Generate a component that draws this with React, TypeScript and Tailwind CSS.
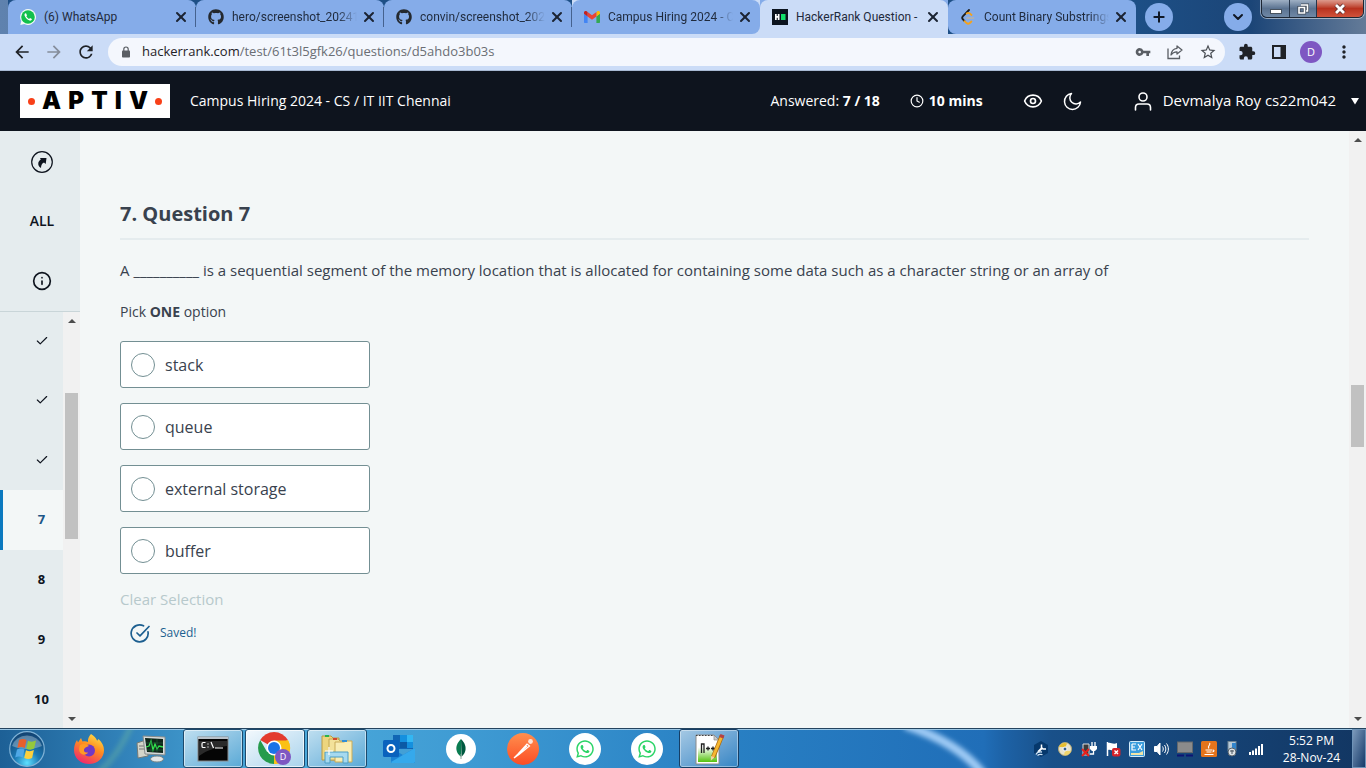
import React from "react";
import { Check, Clock, Eye, Info, Moon, Plus, User, X, ChevronDown } from "lucide-react";
import { FaGithub, FaWhatsapp } from "react-icons/fa";
import { MdArrowBack, MdArrowForward, MdMoreVert, MdRefresh, MdStarBorder, MdVpnKey } from "react-icons/md";

const WhatsAppIcon = () => (
  <svg viewBox="0 0 16 16" className="size-4 shrink-0">
    <path d="M8 0a8 8 0 1 1-3.700 15.100L.3 15.900l1-3.800A8 8 0 0 1 8 0z" fill="#f2fbf5" />
    <circle cx="8" cy="8" r="6.800" fill="#12c04c" />
    <path
      d="M5.300 4.200c-.9.700-1 1.700-.5 2.900 1 2.200 2.500 3.700 4.700 4.500 1.100.3 2.300-.3 2.400-1.600L10 9l-.9 1C7.800 9.500 6.900 8.500 6.300 7.300l.7-.9-.8-2z"
      fill="#fff"
    />
  </svg>
);

const GmailIcon = () => (
  <svg viewBox="0 0 16 12" className="w-4 shrink-0">
    <path d="M1 12h2.600V5.200L0 2.600V11c0 .6.4 1 1 1z" fill="#4285f4" />
    <path d="M12.400 12H15c.6 0 1-.4 1-1V2.600l-3.600 2.600z" fill="#34a853" />
    <path d="M12.400 1v4.400L16 2.700V1.500C16 .2 14.400-.5 13.400.3z" fill="#fbbc04" />
    <path d="M3.600 5.400V1L8 4.300 12.400 1v4.400L8 8.700z" fill="#ea4335" />
    <path d="M0 1.500v1.200l3.600 2.700V1L2.600.3C1.600-.5 0 .2 0 1.500z" fill="#c5221f" />
  </svg>
);

const HackerRankIcon = () => (
  <svg viewBox="0 0 16 16" className="size-4 shrink-0">
    <rect width="16" height="16" fill="#0c141f" />
    <path d="M3 5h1.700v2h1.100V5h1.700v6H5.800V8.800H4.700V11H3z" fill="#fff" />
    <rect x="9" y="5" width="4.500" height="6" fill="#12e06a" />
  </svg>
);

const LeetCodeIcon = () => (
  <svg viewBox="0 0 16 16" className="size-4 shrink-0" fill="none" strokeLinecap="round">
    <path d="M9 1 3 7.200c-1 1-1 2.300 0 3.300l1.500 1.600" stroke="#1c1c1c" strokeWidth="1.800" />
    <path d="M4.500 12.200 6.500 14c1 .9 2.300.9 3.300 0l1.600-1.500M6.700 4.500c1.200-.9 2.300-.8 3.300.1l1.500 1.400" stroke="#f5a21c" strokeWidth="1.800" />
    <path d="M7 9h6.500" stroke="#b9b3a8" strokeWidth="1.600" />
  </svg>
);

const tabs = [
  { title: "(6) WhatsApp", icon: <WhatsAppIcon /> },
  { title: "hero/screenshot_20241", icon: <FaGithub className="size-4 shrink-0 text-[#24292f]" />, fade: true },
  { title: "convin/screenshot_202", icon: <FaGithub className="size-4 shrink-0 text-[#24292f]" />, fade: true },
  { title: "Campus Hiring 2024 - C", icon: <GmailIcon />, fade: true },
  { title: "HackerRank Question -", icon: <HackerRankIcon />, active: true },
  { title: "Count Binary Substrings", icon: <LeetCodeIcon />, fade: true },
];

function TabStrip() {
  return (
    <div className="relative flex h-[34px] items-stretch bg-linear-to-r from-[#5f82ae] via-[#1d4f86] to-[#5d7694] pl-2">
      <div className="flex min-w-0 bg-[#1d4f86]">
        {tabs.map((t, i) => (
          <div
            key={t.title}
            className={
              t.active
                ? "w-[188px] min-w-0 bg-[#85ace9]"
                : i === 3
                  ? "w-[188px] min-w-0 bg-[#cbdcf7]"
                  : "w-[188px] min-w-0"
            }
          >
            <div
              className={
                t.active
                  ? "flex h-full items-center rounded-t-lg bg-[#cbdcf7] pr-[7px] pl-3"
                  : i === 3
                    ? "flex h-full items-center rounded-t-lg rounded-br-lg bg-[#85ace9] pr-[7px] pl-3"
                    : i === 5
                      ? "flex h-full items-center rounded-t-lg rounded-bl-lg bg-[#85ace9] pr-[7px] pl-3"
                      : "flex h-full items-center rounded-t-lg bg-[#85ace9] pr-[7px] pl-3"
              }
            >
              {t.icon}
              <span
                className={
                  t.fade
                    ? "ml-2 min-w-0 flex-1 mask-r-from-85% font-[Roboto,sans-serif] text-xs whitespace-nowrap text-[#1f2a3c]"
                    : "ml-2 min-w-0 flex-1 font-[Roboto,sans-serif] text-xs whitespace-nowrap text-[#1f2a3c]"
                }
              >
                {t.title}
              </span>
              <button aria-label="Close tab" className="ml-1 flex size-4 shrink-0 items-center justify-center">
                <X className="size-4 text-[#1b2433]" strokeWidth={3} />
              </button>
              {i < 3 && <span className="-mr-[7px] ml-[6px] h-5 w-px shrink-0 bg-[#45628f]" />}
            </div>
          </div>
        ))}
      </div>
      <div className="flex flex-1 items-center bg-linear-to-r from-[#1d4f86] via-[#1b4577] to-[#647b98]">
        <button aria-label="New tab" className="ml-[9px] flex size-7 items-center justify-center rounded-full bg-[#85ace9]">
          <Plus className="size-4 text-[#101826]" strokeWidth={3} />
        </button>
        <button aria-label="Search tabs" className="ml-auto flex size-7 items-center justify-center rounded-full bg-[#85ace9]">
          <ChevronDown className="size-4 text-[#101826]" strokeWidth={3} />
        </button>
        <div className="mr-[2px] ml-[9px] flex h-[18px] self-start overflow-hidden rounded-b-md border border-t-0 border-[#1d2633] ring-1 ring-white/50">
          <button aria-label="Minimize" className="flex w-7 items-center justify-center border-r border-[#26364b] bg-linear-to-b from-[#9fb0c4] via-[#5b7391] to-[#6f88a5]">
            <svg viewBox="0 0 12 12" className="size-3">
              <rect x="0.500" y="6.500" width="11" height="4" fill="#fff" stroke="#47525f" />
            </svg>
          </button>
          <button aria-label="Restore" className="flex w-[27px] items-center justify-center border-r border-[#26364b] bg-linear-to-b from-[#9fb0c4] via-[#5b7391] to-[#6f88a5]">
            <svg viewBox="0 0 12 12" className="size-3" fill="none">
              <path d="M4 2h6.500v6H9M2 4.500h5.500V10H2z" stroke="#3f4a58" strokeWidth="3.200" />
              <path d="M4 2h6.500v6H9M2 4.500h5.500V10H2z" stroke="#fff" strokeWidth="1.600" />
            </svg>
          </button>
          <button aria-label="Close window" className="flex w-[46px] items-center justify-center bg-linear-to-b from-[#dc9a8d] via-[#b8321f] to-[#d0523b]">
            <svg viewBox="0 0 14 12" className="h-3 w-[14px]">
              <path d="M3 2l8 8M11 2l-8 8" stroke="#5a2b2b" strokeWidth="4.500" />
              <path d="M3 2l8 8M11 2l-8 8" stroke="#fff" strokeWidth="2.800" />
            </svg>
          </button>
        </div>
      </div>
    </div>
  );
}

function Toolbar() {
  return (
    <div className="flex h-[37px] items-center border-b border-[#a8b9d3] bg-[#cbdcf7] px-3">
      <button aria-label="Back"><MdArrowBack className="size-5 text-[#1f2227]" /></button>
      <button aria-label="Forward" className="ml-3"><MdArrowForward className="size-5 text-[#858d9b]" /></button>
      <button aria-label="Reload" className="ml-3"><MdRefresh className="size-5 text-[#1f2227]" /></button>
      <div className="ml-3 flex h-7 flex-1 items-center rounded-full bg-[#f4f7fd] px-3 text-[13px]">
        <svg viewBox="0 0 12 12" className="size-3">
          <rect x="2" y="4.500" width="8" height="7" rx="0.800" fill="#5a5e64" />
          <path d="M3.800 5V3.200a2.200 2.200 0 0 1 4.400 0V5" fill="none" stroke="#5a5e64" strokeWidth="1.200" />
        </svg>
        <span className="ml-[10px] flex-1 text-[#6a6e74]">
          <span className="text-[#1f2227]">hackerrank.com</span>/test/61t3l5gfk26/questions/d5ahdo3b03s
        </span>
        <button aria-label="Passwords"><MdVpnKey className="size-4 text-[#5a5e64]" /></button>
        <button aria-label="Share" className="ml-4">
          <svg viewBox="0 0 16 16" className="size-4" fill="none" stroke="#5a5e64" strokeWidth="1.300">
            <path d="M1 4.500V14.500h11.500V11.500" />
            <path d="M10 2l5 4-5 4V7.800C7.300 7.700 5.400 8.800 4 11c.3-3.600 2.400-6.300 6-6.700z" strokeLinejoin="round" />
          </svg>
        </button>
        <button aria-label="Bookmark" className="ml-4 -mr-1"><MdStarBorder className="size-[18px] text-[#4a4e54]" /></button>
      </div>
      <button aria-label="Extensions" className="ml-[13px]">
        <svg viewBox="0 0 24 24" className="size-[18px]">
          <path
            d="M20.500 11H19V7c0-1.100-.9-2-2-2h-4V3.500a2.500 2.500 0 0 0-5 0V5H4c-1.100 0-2 .9-2 2v3.800h1.500a2.700 2.700 0 1 1 0 5.400H2V20c0 1.100.9 2 2 2h3.800v-1.500a2.700 2.700 0 1 1 5.400 0V22H17c1.100 0 2-.9 2-2v-4h1.500a2.500 2.500 0 0 0 0-5z"
            fill="#1f2227"
          />
        </svg>
      </button>
      <button aria-label="Side panel" className="ml-4">
        <svg viewBox="0 0 14 14" className="size-[14px]">
          <rect x="1" y="1" width="12" height="12" fill="none" stroke="#1f2227" strokeWidth="2" />
          <rect x="8.500" y="1" width="4.500" height="12" fill="#1f2227" />
        </svg>
      </button>
      <button aria-label="Profile" className="ml-[14px] flex size-[22px] items-center justify-center rounded-full bg-[#7e57c2] text-[11px] text-white">
        D
      </button>
      <button aria-label="Menu" className="ml-3"><MdMoreVert className="size-5 text-[#1f2227]" /></button>
    </div>
  );
}

function Header() {
  return (
    <header className="flex h-[60px] shrink-0 items-center bg-[#0e141e] pr-[6px] pl-5 text-sm text-white">
      <div className="flex h-[34px] w-[150px] items-center justify-between bg-white px-2 text-2xl font-black text-black">
        <span className="size-[7px] rounded-full bg-[#f84018]" />
        <div className="flex w-[106px] justify-between font-[Inter,sans-serif]" role="img" aria-label="Aptiv">
          <span>A</span>
          <span>P</span>
          <span>T</span>
          <span>I</span>
          <span>V</span>
        </div>
        <span className="size-[7px] rounded-full bg-[#f84018]" />
      </div>
      <h1 className="ml-5 flex-1">Campus Hiring 2024 - CS / IT IIT Chennai</h1>
      <span>
        Answered: <b>7 / 18</b>
      </span>
      <span className="ml-[30px] flex items-center gap-[5px]">
        <Clock className="size-[14px]" strokeWidth={2} />
        <b>10 mins</b>
      </span>
      <button aria-label="Preview" className="ml-10"><Eye className="size-5" strokeWidth={2} /></button>
      <button aria-label="Dark mode" className="ml-5">
        <svg viewBox="0 0 20 20" className="size-5" fill="none" stroke="currentColor" strokeWidth="1.500" strokeLinejoin="round">
          <path d="M8.500 2.500a6 6 0 0 0 9 8.500 8 8 0 1 1-9-8.500z" />
        </svg>
      </button>
      <button className="ml-[50px] flex items-center gap-[10px]">
        <svg viewBox="0 0 20 20" className="size-5" fill="none" stroke="currentColor" strokeWidth="1.600" strokeLinecap="round">
          <circle cx="10" cy="6" r="4" />
          <path d="M2.500 19v-2.500c0-2 1.500-3.500 3.500-3.500h8c2 0 3.500 1.500 3.500 3.500V19" />
        </svg>
        <span className="text-[15px]">Devmalya Roy cs22m042</span>
        <svg viewBox="0 0 10 8" className="ml-1 w-[10px]"><path d="M1 1h8L5 7.500z" fill="#fff" /></svg>
      </button>
    </header>
  );
}

const Arrow = ({ down = false }: { down?: boolean }) => (
  <svg viewBox="0 0 8 4" className={down ? "h-1 w-2 rotate-180" : "h-1 w-2"}>
    <path d="M4 0l4 4H0z" fill="#4d4d4d" />
  </svg>
);

const numbers: (number | null)[] = [null, null, null, 7, 8, 9, 10];

function Sidebar() {
  return (
    <nav className="flex w-20 shrink-0 flex-col bg-[#e5ecee] text-[13px] font-bold text-[#0e141e]">
      <div className="grid h-[181px] shrink-0 grid-rows-3 border-b border-[#c9d5d8] pt-px pl-1">
        <button aria-label="Contents" className="flex items-center justify-center">
          <svg viewBox="0 0 22 22" className="size-[22px]">
            <circle cx="11" cy="11" r="10.300" fill="none" stroke="#0e141e" strokeWidth="1.200" />
            <path d="M9 7h6.500l-.8 6-1.700-1.500c-2 .8-2.900 2.500-3 5.500C7.800 15.800 7 14 7.300 12c.2-1.400 1-2.600 2.500-3.600z" fill="#0e141e" />
          </svg>
        </button>
        <button className="text-sm font-semibold">ALL</button>
        <button aria-label="Information" className="flex items-center justify-center">
          <Info className="size-5" strokeWidth={2} />
        </button>
      </div>
      <div className="flex min-h-0 flex-1">
        <ol className="min-w-0 flex-1 overflow-hidden">
          {numbers.map((n, i) => (
            <li
              key={i}
              className={
                n === 7
                  ? "h-[60px] border-l-[3px] border-[#0b79bf] bg-[#f3f7f7] text-[#1c5687]"
                  : i === 0
                    ? "h-[58px] border-l-[3px] border-transparent"
                    : "h-[60px] border-l-[3px] border-transparent"
              }
            >
              <button className="flex h-full w-full items-center justify-center pl-[17px]">
                {n ?? <Check className="size-[14px]" aria-label="Answered" strokeWidth={2} />}
              </button>
            </li>
          ))}
        </ol>
        <div className="flex w-[17px] flex-col items-center bg-[#f1f1f1] py-[7px]">
          <Arrow />
          <div className="mt-[70px] h-[146px] w-[13px] bg-[#c1c1c1]" />
          <div className="mt-auto"><Arrow down /></div>
        </div>
      </div>
    </nav>
  );
}

const options = ["stack", "queue", "external storage", "buffer"];

function Question() {
  return (
    <main className="min-w-0 flex-1 overflow-hidden bg-[#f3f7f7] px-10 pt-[69px] text-[#39424e]">
      <h2 className="border-b-2 border-[#e5ecee] pb-[10px] text-xl leading-7 font-bold">7. Question 7</h2>
      <p className="mt-[18px] text-[15px] leading-6">
        A __________ is a sequential segment of the memory location that is allocated for containing some data such as a
        character string or an array of
      </p>
      <p className="mt-5 text-sm leading-5">
        Pick <b>ONE</b> option
      </p>
      <fieldset className="mt-[19px] flex w-[250px] flex-col gap-[15px]" aria-label="Pick one option">
        {options.map((o) => (
          <label key={o} className="flex h-[47px] items-center gap-[10px] rounded-[3px] border border-[#738f93] bg-white px-[10px] text-base">
            <input type="radio" name="answer" className="size-6 appearance-none rounded-full border border-[#738f93] bg-white" />
            {o}
          </label>
        ))}
      </fieldset>
      <button className="mt-[13px] block text-[15px] leading-6 text-[#b7c9cc]">Clear Selection</button>
      <p className="mt-3 ml-[10px] flex items-center gap-[10px] text-xs leading-5 text-[#1c5f90]">
        <svg viewBox="0 0 20 20" className="size-5" fill="none" stroke="currentColor" strokeWidth="1.700" strokeLinecap="round" strokeLinejoin="round">
          <path d="M18 8.800a8.500 8.500 0 1 1-4.500-6" />
          <path d="M7 10l3 2.800L19 3.500" />
        </svg>
        Saved!
      </p>
    </main>
  );
}

const Orb = () => (
  <svg viewBox="0 0 36 36" className="size-9">
    <defs>
      <radialGradient id="orb" cx="50%" cy="90%" r="90%">
        <stop offset="0" stopColor="#5fe0ff" />
        <stop offset=".4" stopColor="#1b7ab5" />
        <stop offset="1" stopColor="#123f6d" />
      </radialGradient>
    </defs>
    <circle cx="18" cy="18" r="17.300" fill="url(#orb)" stroke="#7fb2d6" strokeWidth="1.200" />
    <path d="M3 15a15.500 14 0 0 1 30 0c-9 4-21 4-30 0z" fill="#fff" opacity=".3" />
    <path d="M10 9c3-1.500 5-1.300 7.500 0L15.800 17c-2.500-1.200-4.700-1.300-7.400 0z" fill="#e8602c" />
    <path d="M19 9.800c2.800 1.200 5 1.200 8-.2l-1.800 8c-2.800 1.400-5 1.300-7.900.1z" fill="#94c83d" />
    <path d="M8 18.500c2.800-1.300 5-1.200 7.500 0l-1.800 8c-2.500-1.300-4.700-1.300-7.500 0z" fill="#4fa8e6" />
    <path d="M17 19.200c2.800 1.300 5 1.200 7.900-.1l-1.800 7.800c-2.800 1.500-5 1.400-7.900.2z" fill="#fcd03c" />
  </svg>
);

const Firefox = () => (
  <svg viewBox="0 0 32 32" className="size-8">
    <defs>
      <linearGradient id="fox" x1=".8" y1="0" x2=".3" y2="1">
        <stop offset="0" stopColor="#ffe34a" />
        <stop offset=".45" stopColor="#ff8b20" />
        <stop offset="1" stopColor="#f0266f" />
      </linearGradient>
    </defs>
    <path d="M18 1c3 1.700 5 4 6.200 6.800L25.500 6C29 9 31 13 31 17c0 8-6.500 14-15 14S1 25 1 17c0-4 1.300-7.500 3-10l1 2.500L8 5l1.500 3.500c2.500-.6 4-.3 5.500.5C14.500 6 16 3 18 1z" fill="url(#fox)" />
    <circle cx="16" cy="17.500" r="6" fill="#7139c6" />
    <path d="M7 12c3-2 7-1 9 1-2 .5-3 1-4.500 2.500C10 18 12 20 15 19.500c-1.500 3-7 3-8.500-1-.7-2.500-.3-4.500.5-6.500z" fill="#ff9a25" />
  </svg>
);

const Monitor = () => (
  <svg viewBox="0 0 32 30" className="h-[30px] w-8">
    <path d="M2 9l9-3 2 16-10 2z" fill="#d4d5ca" stroke="#757a76" />
    <path d="M4 12h5M4 15h5" stroke="#777" />
    <path d="M8 2l22 1v18L10 20z" fill="#d7dbd9" stroke="#858b8b" />
    <path d="M10 4l18 1v14l-16-1z" fill="#10251a" />
    <path d="M11 13l3-1 2-5 2 9 2-6 2 5 2-3 4 1" stroke="#32e34d" strokeWidth="1.300" fill="none" />
    <path d="M11 9h17M12 16h16M16 5v13M22 5v13" stroke="#20643a" strokeWidth=".6" />
    <ellipse cx="22" cy="25" rx="6.500" ry="3" fill="#e3e6e6" stroke="#7c8788" />
  </svg>
);

const Terminal = () => (
  <svg viewBox="0 0 32 26" className="w-8">
    <rect x="1" y="1" width="30" height="24" fill="#050505" stroke="#8a8a8a" />
    <rect x="1" y="1" width="30" height="2" fill="#b9c2ca" />
    <path d="M2 5h28v5C20 11 10 14 2 20z" fill="#fff" opacity=".15" />
    <path d="M8.500 6.500H6.300c-.8 0-1.300.5-1.300 1.300v2.400c0 .8.500 1.300 1.300 1.300h2.200M11 7.500v1M11 10.500v1M14 6l2.500 6M18 12h8" stroke="#fff" strokeWidth="1.200" fill="none" />
  </svg>
);

const Chrome = () => (
  <svg viewBox="0 0 34 34" className="size-[34px]">
    <path d="M16 16L2.200 8A16 16 0 0 1 29.900 8z" fill="#e33b2e" />
    <path d="M16 16L29.900 8A16 16 0 0 1 16 32z" fill="#fbc116" />
    <path d="M16 16v16A16 16 0 0 1 2.200 8l6.900 12z" fill="#269b4c" />
    <path d="M16 8.500h14.100A16 16 0 0 1 16 32l6.500-12z" fill="#fbc116" />
    <circle cx="16" cy="16" r="7.500" fill="#fff" />
    <circle cx="16" cy="16" r="6" fill="#1a73e8" />
    <circle cx="25" cy="25" r="8" fill="#7e57c2" />
    <text x="25" y="28.200" textAnchor="middle" fill="#fff" fontSize="9" fontFamily="Open Sans, sans-serif">D</text>
  </svg>
);

const Explorer = () => (
  <svg viewBox="0 0 34 32" className="w-[34px]">
    <path d="M2 3h9l2 2h6v22H2z" fill="#ecd57e" stroke="#b99a45" />
    <rect x="5" y="2" width="4" height="2" fill="#2bb34b" />
    <path d="M9 6h9l2 2h8v19H9z" fill="#f3e29a" stroke="#c2a552" />
    <rect x="13" y="5" width="4" height="2" fill="#d4472f" />
    <path d="M15 9h9l2-1h6v21H15z" fill="#f9edb4" stroke="#c9ac59" />
    <rect x="22" y="7" width="5" height="2" fill="#2f8fd8" />
    <path d="M5 30V19h23v11h-5v-6H10v6z" fill="#a6d9ef" stroke="#4c9dc4" />
    <path d="M9 14v8M5 18h8" stroke="#fff" strokeWidth="1.200" />
  </svg>
);

const Outlook = () => (
  <svg viewBox="0 0 32 30" className="w-8">
    <path d="M10 1h20v14H10z" fill="#1066b5" />
    <path d="M17 1h7v7h-7z" fill="#1490df" />
    <path d="M24 1h6v7h-6z" fill="#32b7f3" />
    <path d="M17 8h7v6h-7z" fill="#0b5aa5" />
    <path d="M24 8h6v6h-6z" fill="#1490df" />
    <path d="M8 14l12 7 12-7v14a1 1 0 0 1-1 1H9a1 1 0 0 1-1-1z" fill="#1b83d4" />
    <path d="M8 28l24-14v14l-1 1H9z" fill="#35a9ec" />
    <rect x="0" y="6" width="16" height="17" rx="1.500" fill="#0a62bd" />
    <circle cx="8" cy="14.500" r="3.500" fill="none" stroke="#fff" strokeWidth="2" />
  </svg>
);

const Mongo = () => (
  <svg viewBox="0 0 30 30" className="size-[30px]">
    <circle cx="15" cy="15" r="15" fill="#fff" />
    <path d="M15 5c4 4 5 7.500 4.500 11-.4 3-2 5-4 6.700z" fill="#00593f" />
    <path d="M15 5c-4 4-5 7.500-4.500 11 .4 3 2 5 4.500 6.700z" fill="#0a7c51" />
    <path d="M15 20v5" stroke="#8aa59a" />
  </svg>
);

const Postman = () => (
  <svg viewBox="0 0 32 32" className="size-8">
    <defs>
      <linearGradient id="post" x1="0" y1="0" x2="0" y2="1">
        <stop offset="0" stopColor="#ff8f4e" />
        <stop offset="1" stopColor="#fc4c24" />
      </linearGradient>
    </defs>
    <circle cx="16" cy="16" r="16" fill="url(#post)" />
    <circle cx="23.500" cy="8.500" r="2.400" fill="#fff" opacity=".8" />
    <path d="M7 25l4-4 9-10 2.500 2L12 21.500zM11 21l9-8" stroke="#fff" strokeWidth="1.200" fill="none" />
  </svg>
);

const WhatsAppRound = () => (
  <span className="flex size-8 items-center justify-center rounded-full bg-white">
    <FaWhatsapp className="size-5 text-[#2bd466]" />
  </span>
);

const NotepadPP = () => (
  <svg viewBox="0 0 32 32" className="size-8">
    <defs>
      <linearGradient id="npp" x1="0" y1="0" x2="0" y2="1">
        <stop offset="0.300" stopColor="#fff" />
        <stop offset="1" stopColor="#54c20e" />
      </linearGradient>
    </defs>
    <path d="M3 2h18l5 5v24H3z" fill="#fff" stroke="#8a8a8a" />
    <path d="M5 8h19v21H5z" fill="url(#npp)" />
    <path d="M3 2.500h18" stroke="#444" strokeDasharray="1.500 1.500" />
    <path d="M21 2v5h5z" fill="#ccc" stroke="#888" strokeWidth=".7" />
    <path d="M8.500 20v-9h2.500v9M13 15.500h4M15 13.500v4M18 15.500h4M20 13.500v4" stroke="#202020" strokeWidth="1.300" fill="none" />
    <path d="M29 2.500l-9 22" stroke="#a96a12" strokeWidth="4.500" />
    <path d="M28.500 4l-8.500 20" stroke="#f6b731" strokeWidth="3" />
    <path d="M27.500 1l4 1.500-1.200 3-4-1.600z" fill="#b64242" />
    <path d="M18 23l3.500 1.300-3.700 3.500z" fill="#f2d4a4" />
  </svg>
);

const apps = [
  { name: "Firefox", icon: <Firefox /> },
  { name: "System monitor", icon: <Monitor /> },
  { name: "Command prompt", icon: <Terminal />, open: true },
  { name: "Chrome", icon: <Chrome />, focused: true },
  { name: "Explorer", icon: <Explorer />, open: true },
  { name: "Outlook", icon: <Outlook /> },
  { name: "MongoDB Compass", icon: <Mongo /> },
  { name: "Postman", icon: <Postman /> },
  { name: "WhatsApp", icon: <WhatsAppRound /> },
  { name: "WhatsApp Web", icon: <WhatsAppRound /> },
  { name: "Notepad++", icon: <NotepadPP />, dim: true },
];

const trayIcons = [
  <g key="wrench">
    <path d="M8 0l7 4v8l-7 4-7-4V4z" fill="#06386c" />
    <path d="M5 11l4-4" stroke="#fff" strokeWidth="2" />
    <path d="M8.500 3.500v3l1.500 1.500h3" stroke="#fff" strokeWidth="1.500" fill="none" />
    <path d="M3 13.500c1-2.500 3-3 6-2.500M4.500 14.500c1.500-1.500 3-1.500 5-.8" stroke="#cfe3f5" fill="none" strokeWidth="1.300" />
  </g>,
  <g key="disc">
    <circle cx="8" cy="8" r="6.500" fill="#e9e4cd" stroke="#b5a873" />
    <path d="M2 6a6 6 0 0 1 8-3.500L8.500 6z" fill="#e6be2f" />
    <path d="M14 10a6 6 0 0 1-7 4l1-4z" fill="#efd56b" />
    <circle cx="8" cy="8" r="2" fill="#355f8a" stroke="#fff" />
  </g>,
  <g key="power">
    <path d="M2 3h6v11H2z" fill="#3a3a3a" stroke="#ddd" />
    <path d="M11 1v4M14 1v4" stroke="#fff" strokeWidth="1.300" />
    <path d="M9 5h7v3l-2 2h-3L9 8z" fill="#fff" />
    <path d="M12.500 10v3H9" stroke="#fff" strokeWidth="1.300" fill="none" />
    <path d="M1 8l7 7M8 8l-7 7" stroke="#e8201c" strokeWidth="2" />
  </g>,
  <g key="flag">
    <path d="M2.500 1v14" stroke="#fff" strokeWidth="1.500" />
    <path d="M3 2c3-1 5 2 9 0v7c-4 2-6-1-9 0z" fill="#fff" />
    <rect x="7" y="7" width="8.500" height="8.500" rx="2" fill="#d3222a" />
    <path d="M9.500 9.500l3.500 3.500M13 9.500L9.500 13" stroke="#fff" strokeWidth="1.400" />
  </g>,
  <g key="gfx">
    <rect x="0.500" y="0.500" width="15" height="15" rx="1" fill="#3b9ddd" stroke="#d5ecfa" />
    <path d="M3 3h4M3 3v6h4M3 6h3M9 3l4 6M13 3L9 9" stroke="#fff" strokeWidth="1.200" fill="none" />
    <path d="M2 12h8l4-2v4H2z" fill="#f1e4a6" />
  </g>,
  <g key="volume" fill="none" stroke="#fff">
    <path d="M1.500 5.500h2.500l3-3.500v12l-3-3.500H1.500z" fill="#fff" />
    <path d="M9.500 5.500c1 1.500 1 3.500 0 5M11.500 4c1.800 2.400 1.800 5.600 0 8M13.500 2.500c2.500 3.300 2.500 7.700 0 11" />
  </g>,
  <g key="display">
    <rect x="0.500" y="1" width="15" height="10.500" fill="#8b8b8b" stroke="#64686c" />
    <path d="M0 14.500h7M9 14.500h7" stroke="#0c1474" strokeWidth="2" />
  </g>,
  <g key="java">
    <rect width="16" height="16" rx="1.500" fill="#e4741c" />
    <path d="M8.500 2c2 2-3 3-.5 5.500M4.500 9h6.500M5.500 11h5M3.500 13.500h9M11.500 9c2 0 2 1.500 0 2" stroke="#fff" strokeWidth="1.100" fill="none" />
  </g>,
  <g key="device">
    <rect x="3" y="0.500" width="8" height="9" fill="#b9cbd9" stroke="#6e8494" />
    <rect x="7" y="2" width="4" height="8" fill="#3285cc" />
    <circle cx="7" cy="11" r="4" fill="#dde3e6" stroke="#59636b" />
    <path d="M5 10h4M7 9v4" stroke="#4b555e" />
  </g>,
  <g key="signal" fill="#fff">
    <rect x="0" y="11" width="2" height="3" />
    <rect x="3" y="9.500" width="2" height="4.500" />
    <rect x="6" y="7.500" width="2" height="6.500" />
    <rect x="9" y="5" width="2" height="9" />
    <rect x="12" y="3" width="2" height="11" />
  </g>,
];

function Taskbar() {
  return (
    <footer className="relative flex h-10 shrink-0 items-center overflow-hidden border-t border-[#24445f] bg-linear-to-r from-[#1f639a] via-[#2a83c6] to-[#133b6e] text-white">
      <svg viewBox="0 0 1366 40" preserveAspectRatio="none" className="absolute inset-0 h-full w-full">
        <defs>
          <linearGradient id="bar">
            <stop offset="0" stopColor="#1d6096" />
            <stop offset=".1" stopColor="#3486bd" />
            <stop offset=".2" stopColor="#4cabdc" />
            <stop offset=".34" stopColor="#3f9bd3" />
            <stop offset=".52" stopColor="#2981c4" />
            <stop offset=".72" stopColor="#206eb8" />
            <stop offset=".735" stopColor="#1d62a6" />
            <stop offset=".77" stopColor="#195089" />
            <stop offset="1" stopColor="#123662" />
          </linearGradient>
          <filter id="soft" x="-20%" y="-50%" width="140%" height="200%">
            <feGaussianBlur stdDeviation="2.500" />
          </filter>
        </defs>
        <rect width="1366" height="40" fill="url(#bar)" />
        <path d="M905-4c35 12 60 27 78 50" stroke="#9fcbf5" strokeWidth="9" fill="none" filter="url(#soft)" />
        <path d="M98 45c14-12 24-26 34-50" stroke="#7cc49a" strokeWidth="5" fill="none" opacity=".4" filter="url(#soft)" />
        <rect width="1366" height="1" fill="#9ec9e6" />
      </svg>
      <div className="relative flex h-full min-w-0 flex-1 items-center gap-[2px]">
        <button aria-label="Start" className="flex w-[57px] justify-center pr-[3px]"><Orb /></button>
        {apps.map((a) => (
          <button
            key={a.name}
            aria-label={a.name}
            className={
              a.focused
                ? "flex h-[39px] w-[60px] items-center justify-center rounded-[3px] border border-[#1c4a6d] bg-linear-to-br from-[#f3f9fd] to-[#a9d3ec] ring-1 ring-white/70 ring-inset"
                : a.open
                  ? "flex h-[39px] w-[60px] items-center justify-center rounded-[3px] border border-[#1c4a6d] bg-linear-to-br from-[#bfdff0] to-[#58a9d6] ring-1 ring-white/50 ring-inset"
                  : a.dim
                    ? "flex h-[39px] w-[60px] items-center justify-center rounded-[3px] border border-[#163f66] bg-linear-to-br from-[#a5c9e4] to-[#3385c4] ring-1 ring-white/40 ring-inset"
                    : "flex h-[39px] w-[60px] items-center justify-center"
            }
          >
            {a.icon}
          </button>
        ))}
      </div>
      <div className="relative flex h-full items-center">
        <div className="flex gap-2">
          {trayIcons.map((icon) => (
            <svg key={icon.key} viewBox="0 0 16 16" className="size-4">{icon}</svg>
          ))}
        </div>
        <div className="w-[87px] pl-[6px] text-center text-xs leading-[17px]">
          5:52 PM
          <br />
          28-Nov-24
        </div>
        <button aria-label="Show desktop" className="h-full w-[14px] border border-[#6e93b8] bg-linear-to-br from-[#7d9abb] to-[#153a69]" />
      </div>
    </footer>
  );
}

export default function App() {
  return (
    <div className="flex h-screen flex-col overflow-hidden font-['Open_Sans','Noto_Sans',sans-serif]">
      <TabStrip />
      <Toolbar />
      <Header />
      <div className="flex min-h-0 flex-1">
        <Sidebar />
        <Question />
        <div className="flex w-[17px] flex-col items-center bg-[#f1f1f1] py-[7px]">
          <Arrow />
          <div className="mt-[243px] h-[62px] w-[13px] bg-[#c1c1c1]" />
          <div className="mt-auto"><Arrow down /></div>
        </div>
      </div>
      <Taskbar />
    </div>
  );
}
